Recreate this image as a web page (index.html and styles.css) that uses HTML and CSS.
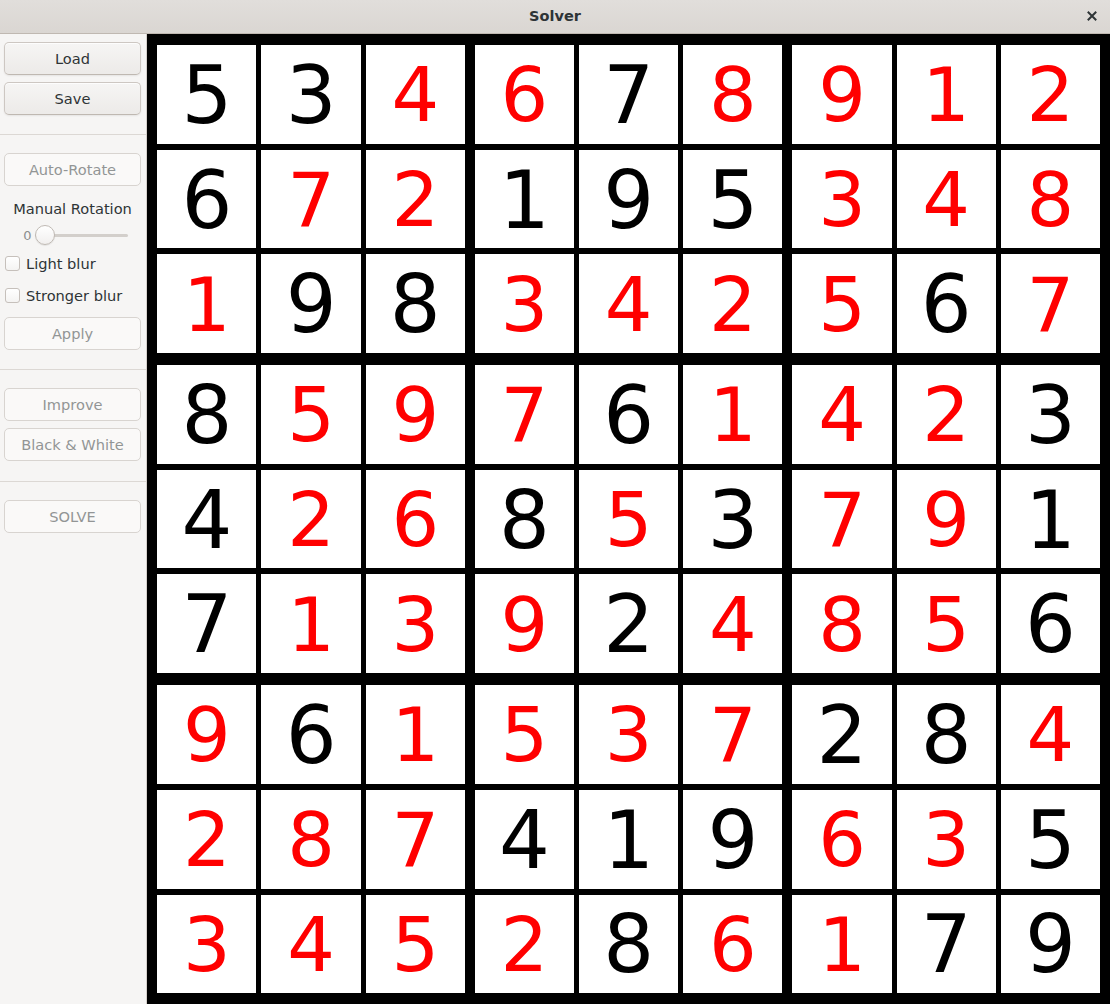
FILE: index.html
```html
<!DOCTYPE html>
<html>
<head>
<meta charset="utf-8">
<title>Solver</title>
<link rel="stylesheet" href="styles.css">
</head>
<body>
<div class="window">
  <header class="titlebar">
    <span class="title">Solver</span>
    <span class="close"><svg width="10" height="10" viewBox="0 0 10 10"><path d="M1.5 1.5 L8.5 8.5 M8.5 1.5 L1.5 8.5" stroke="#2e3436" stroke-width="2" stroke-linecap="square"/></svg></span>
  </header>
  <div class="content">
    <aside class="sidebar">
      <button class="btn btn-load">Load</button>
      <button class="btn btn-save">Save</button>
      <div class="sep sep-1"></div>
      <button class="btn btn-auto" disabled>Auto-Rotate</button>
      <div class="rot-label">Manual Rotation</div>
      <div class="slider-row">
        <span class="slider-value">0</span>
        <span class="slider-track"><span class="slider-knob"></span></span>
      </div>
      <label class="check check-1"><span class="box"></span>Light blur</label>
      <label class="check check-2"><span class="box"></span>Stronger blur</label>
      <button class="btn btn-apply" disabled>Apply</button>
      <div class="sep sep-2"></div>
      <button class="btn btn-improve" disabled>Improve</button>
      <button class="btn btn-bw" disabled>Black &amp; White</button>
      <div class="sep sep-3"></div>
      <button class="btn btn-solve" disabled>SOLVE</button>
    </aside>
    <main class="board">
      <div class="blk">
        <div class="cell k">5</div><div class="cell k">3</div><div class="cell r">4</div>
        <div class="cell k">6</div><div class="cell r">7</div><div class="cell r">2</div>
        <div class="cell r">1</div><div class="cell k">9</div><div class="cell k">8</div>
      </div>
      <div class="blk">
        <div class="cell r">6</div><div class="cell k">7</div><div class="cell r">8</div>
        <div class="cell k">1</div><div class="cell k">9</div><div class="cell k">5</div>
        <div class="cell r">3</div><div class="cell r">4</div><div class="cell r">2</div>
      </div>
      <div class="blk">
        <div class="cell r">9</div><div class="cell r">1</div><div class="cell r">2</div>
        <div class="cell r">3</div><div class="cell r">4</div><div class="cell r">8</div>
        <div class="cell r">5</div><div class="cell k">6</div><div class="cell r">7</div>
      </div>
      <div class="blk">
        <div class="cell k">8</div><div class="cell r">5</div><div class="cell r">9</div>
        <div class="cell k">4</div><div class="cell r">2</div><div class="cell r">6</div>
        <div class="cell k">7</div><div class="cell r">1</div><div class="cell r">3</div>
      </div>
      <div class="blk">
        <div class="cell r">7</div><div class="cell k">6</div><div class="cell r">1</div>
        <div class="cell k">8</div><div class="cell r">5</div><div class="cell k">3</div>
        <div class="cell r">9</div><div class="cell k">2</div><div class="cell r">4</div>
      </div>
      <div class="blk">
        <div class="cell r">4</div><div class="cell r">2</div><div class="cell k">3</div>
        <div class="cell r">7</div><div class="cell r">9</div><div class="cell k">1</div>
        <div class="cell r">8</div><div class="cell r">5</div><div class="cell k">6</div>
      </div>
      <div class="blk">
        <div class="cell r">9</div><div class="cell k">6</div><div class="cell r">1</div>
        <div class="cell r">2</div><div class="cell r">8</div><div class="cell r">7</div>
        <div class="cell r">3</div><div class="cell r">4</div><div class="cell r">5</div>
      </div>
      <div class="blk">
        <div class="cell r">5</div><div class="cell r">3</div><div class="cell r">7</div>
        <div class="cell k">4</div><div class="cell k">1</div><div class="cell k">9</div>
        <div class="cell r">2</div><div class="cell k">8</div><div class="cell r">6</div>
      </div>
      <div class="blk">
        <div class="cell k">2</div><div class="cell k">8</div><div class="cell r">4</div>
        <div class="cell r">6</div><div class="cell r">3</div><div class="cell k">5</div>
        <div class="cell r">1</div><div class="cell k">7</div><div class="cell k">9</div>
      </div>
    </main>
  </div>
</div>
</body>
</html>
```
FILE: styles.css
```css
* { box-sizing: border-box; }
html, body { margin: 0; padding: 0; }
body {
  width: 1110px;
  height: 1004px;
  overflow: hidden;
  font-family: "DejaVu Sans", "Liberation Sans", sans-serif;
  color: #2e3436;
  background: #f6f5f4;
}
.window { display: flex; flex-direction: column; height: 1004px; }

.titlebar {
  position: relative;
  height: 34px;
  flex: none;
  display: flex;
  align-items: center;
  justify-content: center;
  background: linear-gradient(to top, #dad6d2, #e1dedb);
  border-bottom: 1px solid #bfb8b1;
}
.title { font-weight: bold; font-size: 14.5px; color: #2e3436; margin-top: -1px; }
.close {
  position: absolute;
  right: 13px;
  top: 11px;
  width: 10px;
  height: 10px;
  display: flex;
}

.content { flex: 1; display: flex; min-height: 0; }

.sidebar {
  width: 147px;
  flex: none;
  background: #f6f5f4;
  border-right: 1px solid #d5d0cc;
  display: flex;
  flex-direction: column;
  padding: 8px 5px 0 4px;
}
.btn {
  height: 33px;
  width: 100%;
  flex: none;
  margin: 0;
  padding: 0;
  font-family: inherit;
  font-size: 14.6px;
  color: #2e3436;
  border: 1px solid #cdc7c2;
  border-bottom-color: #bfb8b1;
  border-radius: 5px;
  background: linear-gradient(to top, #edebe9 2px, #f6f5f4);
  box-shadow: inset 0 1px rgba(255,255,255,0.8), 0 1px 2px rgba(0,0,0,0.07);
}
.btn:disabled {
  color: #929595;
  border-color: #d8d4d0;
  background: #faf9f8;
  box-shadow: none;
}
.btn-save { margin-top: 7px; }
.sep { height: 1px; background: #dcd8d4; margin-left: -4px; margin-right: -5px; flex: none; }
.sep-1 { margin-top: 19px; }
.btn-auto { margin-top: 18px; }
.rot-label {
  margin-top: 14px;
  height: 18px;
  line-height: 18px;
  text-align: center;
  font-size: 14.6px;
  color: #2e3436;
}
.slider-row {
  margin-top: 6px;
  height: 22px;
  display: flex;
  align-items: center;
  padding-left: 16px;
}
.slider-value { font-size: 13px; color: #8b8e8f; width: 15px; text-align: center; padding-top: 1px; }
.slider-track {
  position: relative;
  width: 93px;
  height: 3px;
  border-radius: 2px;
  background: #d3cfcb;
}
.slider-knob {
  position: absolute;
  left: 0;
  top: -9px;
  width: 20px;
  height: 20px;
  border-radius: 50%;
  border: 1px solid #c0bab4;
  background: linear-gradient(to top, #f1efee, #ffffff);
  box-shadow: 0 1px 1px rgba(0,0,0,0.08);
}
.check {
  height: 24px;
  display: flex;
  align-items: center;
  font-size: 14.6px;
  color: #2e3436;
  padding-left: 1px;
}
.check .box {
  width: 15px;
  height: 15px;
  border: 1px solid #c6c0bb;
  border-radius: 3px;
  background: linear-gradient(to top, #f4f3f2, #ffffff);
  margin-right: 6px;
  flex: none;
}
.check-1 { margin-top: 5px; }
.check-2 { margin-top: 8px; }
.btn-apply { margin-top: 10px; }
.sep-2 { margin-top: 19px; }
.btn-improve { margin-top: 18px; }
.btn-bw { margin-top: 7px; }
.sep-3 { margin-top: 20px; }
.btn-solve { margin-top: 18px; }

.board {
  flex: 1;
  background: #000;
  display: grid;
  grid-template-columns: repeat(3, auto);
  grid-template-rows: repeat(3, auto);
  column-gap: 10px;
  row-gap: 12px;
  padding: 11px 0 0 10.3px;
  align-content: start;
  justify-content: start;
}
.blk {
  display: grid;
  grid-template-columns: repeat(3, 99.2px);
  grid-template-rows: repeat(3, 98.7px);
  column-gap: 5px;
  row-gap: 6px;
}
.cell {
  background: #fff;
  display: flex;
  align-items: center;
  justify-content: center;
  font-family: "DejaVu Sans", sans-serif;
  line-height: 1;
  padding-top: 3px;
}
.cell.k { color: #000; font-size: 80px; }
.cell.r { color: #ff0000; font-size: 75px; }
```
